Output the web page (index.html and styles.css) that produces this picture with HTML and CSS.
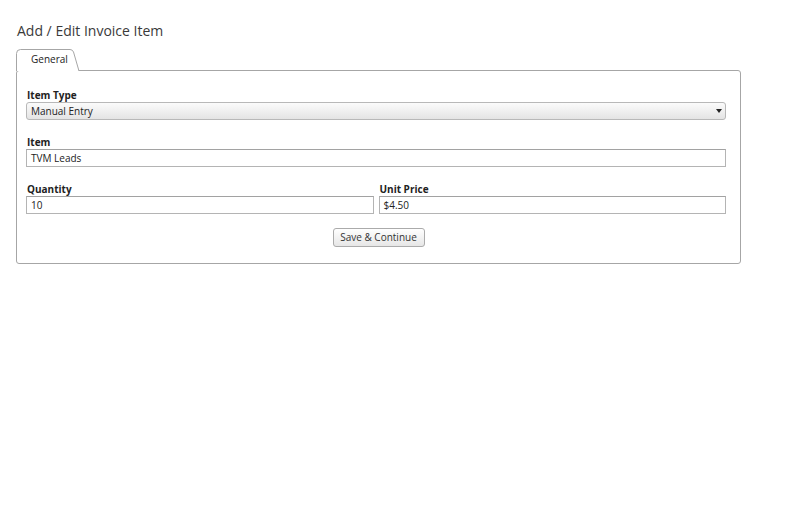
FILE: index.html
```html
<!DOCTYPE html>
<html lang="en">
<head>
	<meta charset="UTF-8">
	<title>Add / Edit Invoice Item</title>
	<link rel="stylesheet" href="styles.css">
</head>
<body>
	<div id="page">
		<h1 class="title">Add / Edit Invoice Item</h1>
		<div class="tabs">
			<div class="tab on">
				<svg class="tab-bg" width="64" height="22" viewBox="0 0 64 22">
					<path d="M0.5 22 V4.5 Q0.5 0.5 4.5 0.5 H54 Q56.5 0.5 57.5 3 L63 22" fill="#fff" stroke="#a6a6a6"/>
				</svg>
				<span>General</span>
			</div>
		</div>
		<div class="panel">
			<div class="field">
				<label>Item Type</label>
				<div class="select">
					<span>Manual Entry</span>
					<i class="caret"></i>
				</div>
			</div>
			<div class="field">
				<label>Item</label>
				<div class="input">TVM Leads</div>
			</div>
			<div class="row">
				<div class="field">
					<label>Quantity</label>
					<div class="input">10</div>
				</div>
				<div class="field">
					<label>Unit Price</label>
					<div class="input">$4.50</div>
				</div>
			</div>
			<div class="actions">
				<button class="btn">Save &amp; Continue</button>
			</div>
		</div>
	</div>
</body>
</html>
```

FILE: styles.css
```css
* {
	margin: 0;
	padding: 0;
	box-sizing: border-box;
}
body {
	background: #fff;
	font-family: "Open Sans", "Liberation Sans", sans-serif;
	color: #222;
}
#page {
	padding: 21px 59px 0 16px;
}
.title {
	font-size: 14px;
	font-weight: normal;
	line-height: 20px;
	color: #3a3a3a;
	padding-left: 1px;
	margin-bottom: 8px;
}
.tabs {
	display: flex;
	height: 21px;
}
.tab {
	position: relative;
	width: 64px;
	height: 22px;
	font-size: 10px;
	line-height: 21px;
	padding-left: 15px;
	color: #222;
}
.tab-bg {
	position: absolute;
	left: 0;
	top: 0;
}
.tab span {
	position: relative;
}
.panel {
	border: 1px solid #a6a6a6;
	border-radius: 3px;
	padding: 17px 14px 16px 9px;
}
.field {
	display: flex;
	flex-direction: column;
	margin-bottom: 15px;
}
.row .field {
	flex: 1;
	margin-bottom: 14px;
}
.field label {
	font-size: 10px;
	font-weight: bold;
	line-height: 14px;
	height: 14px;
	padding-left: 1px;
}
.select, .input {
	height: 18px;
	font-size: 10px;
	line-height: 16px;
	padding-left: 4px;
	border: 1px solid #b4b4b4;
}
.input {
	background: #fff;
	border-top-color: #a2a2a2;
}
.select {
	display: flex;
	justify-content: space-between;
	align-items: center;
	border-radius: 3px;
	background: linear-gradient(#fbfbfb, #e4e4e4);
	border-color: #b8b8b8;
	padding-right: 3px;
}
.caret {
	width: 0;
	height: 0;
	border-left: 3px solid transparent;
	border-right: 3px solid transparent;
	border-top: 4px solid #222;
}
.row {
	display: flex;
	gap: 5px;
}
.actions {
	display: flex;
	justify-content: center;
	padding-left: 5px;
}
.btn {
	display: block;
	width: 92px;
	height: 19px;
	font-family: inherit;
	font-size: 10px;
	line-height: 17px;
	color: #333;
	background: linear-gradient(#ffffff, #e6e6e6);
	border: 1px solid #ababab;
	border-radius: 3px;
}
```
